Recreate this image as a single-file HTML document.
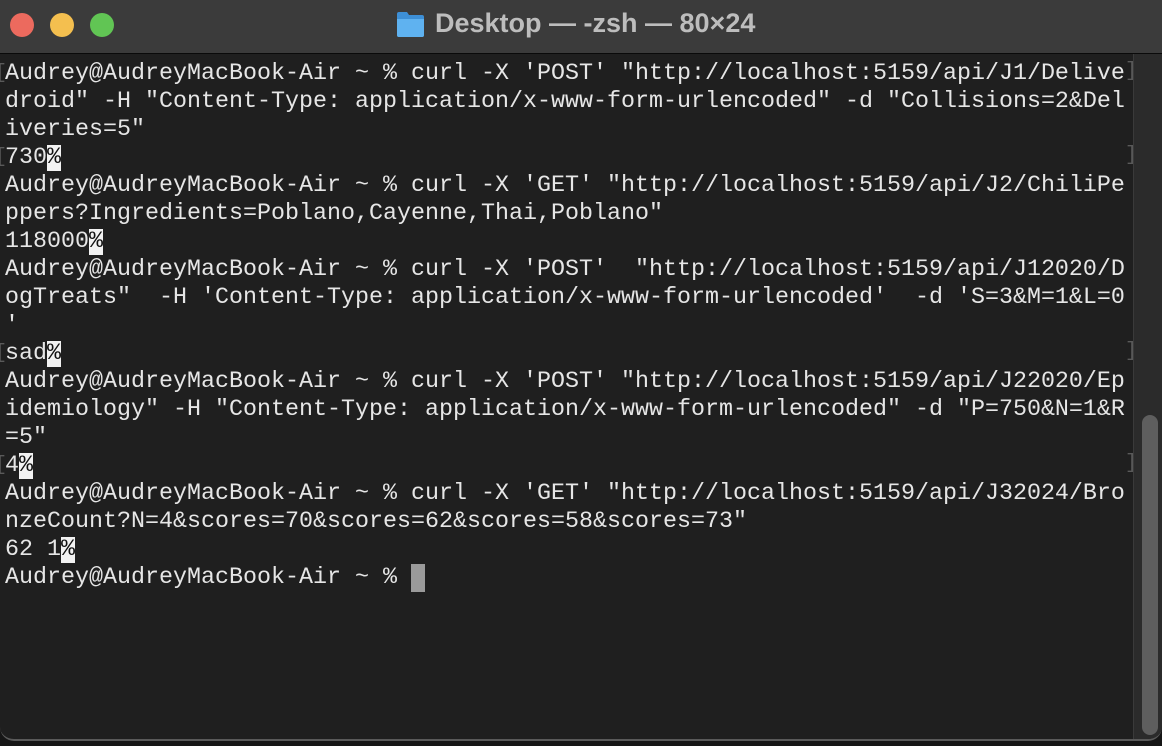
<!DOCTYPE html>
<html><head><meta charset="utf-8"><style>
html,body{margin:0;padding:0;background:#161616;width:1162px;height:746px;overflow:hidden}
#win{position:absolute;left:0;top:0;width:1162px;height:741px;background:#1f1f1f;border-radius:0 0 14px 14px;overflow:hidden;border-bottom:2px solid #5a5a5a;box-sizing:border-box}
#tb{position:absolute;left:0;top:0;width:1162px;height:53px;background:#3b3b3b;border-bottom:1px solid #0a0a0a}
.dot{position:absolute;top:13px;width:24px;height:24px;border-radius:50%}
#title{position:absolute;left:435px;top:8px;font:bold 27px "Liberation Sans",sans-serif;color:#bdbdbd;white-space:nowrap}
#term{position:absolute;left:5px;top:60px;font-family:"Liberation Mono",monospace;font-size:23.33px;line-height:28px;color:#e6e6e6;white-space:pre}
.l{height:28px}
.p{background:#f2f2f2;color:#111}
.cur{display:inline-block;width:14px;height:28px;background:#9a9a9a;vertical-align:top}
#sb{position:absolute;left:1133px;top:54px;width:29px;height:690px;background:#2b2b2b;border-left:1px solid #3a3a3a}
#thumb{position:absolute;left:1142px;top:415px;width:16px;height:320px;background:#5e5e5e;border-radius:8px}
.mk{position:absolute;font-family:"Liberation Mono",monospace;font-size:20px;color:#5a5a5a}
</style></head><body>
<div id="win">
<div id="tb">
<div class="dot" style="left:10px;background:#ec6a5e"></div>
<div class="dot" style="left:50px;background:#f4bf4f"></div>
<div class="dot" style="left:90px;background:#61c554"></div>
<svg style="position:absolute;left:396px;top:11px" width="29" height="27" viewBox="0 0 29 27"><path d="M1 3 Q1 1 3 1 H11 L13 4 H26 Q28 4 28 6 V24 Q28 26 26 26 H3 Q1 26 1 24 Z" fill="#3d8fd6"/><path d="M1 8 H28 V24 Q28 26 26 26 H3 Q1 26 1 24 Z" fill="#5fb2f0"/></svg>
<div id="title">Desktop — -zsh — 80×24</div>
</div>
<div id="sb"></div><div id="thumb"></div>
<div class="mk" style="left:1125px;top:60px">]</div>
<div class="mk" style="left:1125px;top:144px">]</div>
<div class="mk" style="left:1125px;top:340px">]</div>
<div class="mk" style="left:1125px;top:452px">]</div>
<div class="mk" style="left:-5px;top:62px">[</div>
<div class="mk" style="left:-5px;top:146px">[</div>
<div class="mk" style="left:-5px;top:342px">[</div>
<div class="mk" style="left:-5px;top:454px">[</div>
<div id="term"><div class="l">Audrey@AudreyMacBook-Air ~ % curl -X 'POST' "http://localhost:5159/api/J1/Delive</div><div class="l">droid" -H "Content-Type: application/x-www-form-urlencoded" -d "Collisions=2&amp;Del</div><div class="l">iveries=5"</div><div class="l">730<span class="p">%</span></div><div class="l">Audrey@AudreyMacBook-Air ~ % curl -X 'GET' "http://localhost:5159/api/J2/ChiliPe</div><div class="l">ppers?Ingredients=Poblano,Cayenne,Thai,Poblano"</div><div class="l">118000<span class="p">%</span></div><div class="l">Audrey@AudreyMacBook-Air ~ % curl -X 'POST'  "http://localhost:5159/api/J12020/D</div><div class="l">ogTreats"  -H 'Content-Type: application/x-www-form-urlencoded'  -d 'S=3&amp;M=1&amp;L=0</div><div class="l">'</div><div class="l">sad<span class="p">%</span></div><div class="l">Audrey@AudreyMacBook-Air ~ % curl -X 'POST' "http://localhost:5159/api/J22020/Ep</div><div class="l">idemiology" -H "Content-Type: application/x-www-form-urlencoded" -d "P=750&amp;N=1&amp;R</div><div class="l">=5"</div><div class="l">4<span class="p">%</span></div><div class="l">Audrey@AudreyMacBook-Air ~ % curl -X 'GET' "http://localhost:5159/api/J32024/Bro</div><div class="l">nzeCount?N=4&amp;scores=70&amp;scores=62&amp;scores=58&amp;scores=73"</div><div class="l">62 1<span class="p">%</span></div><div class="l">Audrey@AudreyMacBook-Air ~ % <span class="cur"></span></div></div>
</div>
</body></html>
